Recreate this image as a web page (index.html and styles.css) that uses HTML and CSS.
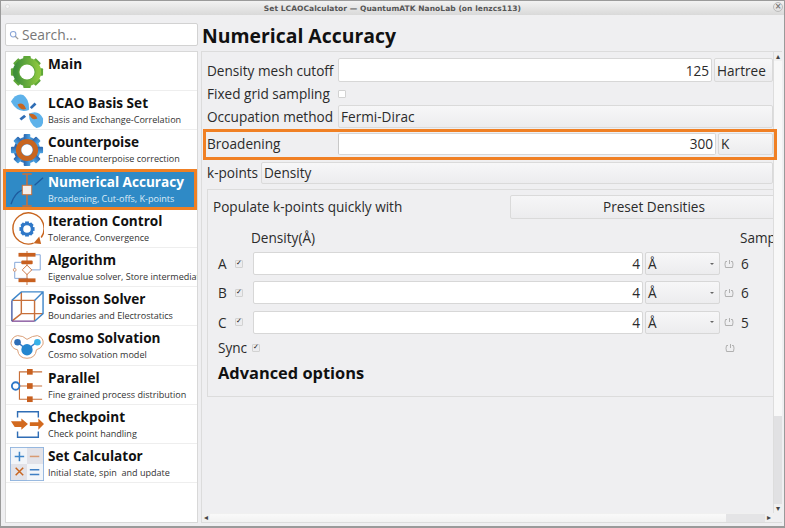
FILE: index.html
```html
<!DOCTYPE html>
<html lang="en">
<head>
<meta charset="utf-8">
<title>Set LCAOCalculator</title>
<link rel="stylesheet" href="styles.css">
</head>
<body>
<div class="window">
  <header class="titlebar">
    <span class="dot"></span>
    <span class="title">Set LCAOCalculator — QuantumATK NanoLab (on lenzcs113)</span>
    <span class="close">×</span>
  </header>
  <div class="main">
    <aside class="sidebar">
      <div class="search">
        <svg class="search-icon" viewBox="0 0 12 12"><circle cx="5" cy="5" r="3.3" fill="none" stroke="#8aa6d8" stroke-width="1.3"/><path d="M7.5 7.5L11 11" stroke="#9a9a9a" stroke-width="1.5"/></svg>
        <span>Search...</span>
      </div>
      <ul class="list">
        <li class="item">
          <svg class="icon" viewBox="0 0 36 36"><defs><linearGradient id="g1" x1="0" x2="1"><stop offset="0" stop-color="#3f8f3a"/><stop offset="1" stop-color="#8cc63f"/></linearGradient></defs><g fill="url(#g1)"><circle cx="18" cy="18" r="14"/></g><g fill="#5fa838"><rect x="14" y="1" width="8" height="34" rx="1"/><rect x="14" y="1" width="8" height="34" rx="1" transform="rotate(45 18 18)"/><rect x="14" y="1" width="8" height="34" rx="1" transform="rotate(90 18 18)"/><rect x="14" y="1" width="8" height="34" rx="1" transform="rotate(135 18 18)"/></g><circle cx="18" cy="18" r="12" fill="none" stroke="url(#g1)" stroke-width="6"/><circle cx="18" cy="18" r="8" fill="#fff"/></svg>
          <div class="text"><b>Main</b></div>
        </li>
        <li class="item">
          <svg class="icon" viewBox="0 0 36 36"><path d="M1 8Q6-1 14 1Q21 6 20 17Q8 21 1 8Z" fill="#5eb2ea"/><path d="M20 21Q30 16 35 26Q36 36 28 36Q20 32 20 21Z" fill="#5eb2ea"/><path d="M8 11Q14 8 17 16Q11 18 8 11Z" fill="#c8651f"/><path d="M20 21Q27 20 29 26Q23 29 20 21Z" fill="#c8651f"/><path d="M21 14L26 9L28 11L23 16Z" fill="#2f6db5"/><path d="M10 26L15 22L17 24L12 28Z" fill="#2f6db5"/></svg>
          <div class="text"><b>LCAO Basis Set</b><small>Basis and Exchange-Correlation</small></div>
        </li>
        <li class="item">
          <svg class="icon" viewBox="0 0 36 36"><defs><linearGradient id="g2" x1="0" x2="1"><stop offset="0" stop-color="#2b64ad"/><stop offset="1" stop-color="#4aa4e4"/></linearGradient></defs><g fill="url(#g2)"><circle cx="18" cy="18" r="14"/><rect x="14.5" y="1" width="7" height="34" rx="1"/><rect x="14.5" y="1" width="7" height="34" rx="1" transform="rotate(45 18 18)"/><rect x="14.5" y="1" width="7" height="34" rx="1" transform="rotate(90 18 18)"/><rect x="14.5" y="1" width="7" height="34" rx="1" transform="rotate(135 18 18)"/></g><circle cx="18" cy="18" r="9" fill="none" stroke="#c8651f" stroke-width="5.500"/><circle cx="18" cy="18" r="6" fill="#fff"/></svg>
          <div class="text"><b>Counterpoise</b><small>Enable counterpoise correction</small></div>
        </li>
        <li class="item selected">
          <svg class="icon" viewBox="0 0 36 36"><path d="M1 33Q5 21 13 18M26 13L35 5" fill="none" stroke="#1d5a9e" stroke-width="1.400"/><path d="M13 1H23M18 1V35M13 35H23" fill="none" stroke="#c8703a" stroke-width="1.600"/><rect x="13" y="13" width="10" height="10" fill="#f6efe9" stroke="#c8703a"/></svg>
          <div class="text"><b>Numerical Accuracy</b><small>Broadening, Cut-offs, K-points</small></div>
        </li>
        <li class="item">
          <svg class="icon" viewBox="0 0 36 36"><path d="M25 33A16.500 16.500 0 1 1 33 27" fill="none" stroke="#c8651f" stroke-width="1.500"/><path d="M25 33L33 34L31 26Z" fill="#c8651f"/><g fill="#2f78c8"><rect x="16" y="10" width="4" height="16"/><rect x="16" y="10" width="4" height="16" transform="rotate(45 18 18)"/><rect x="16" y="10" width="4" height="16" transform="rotate(90 18 18)"/><rect x="16" y="10" width="4" height="16" transform="rotate(135 18 18)"/></g><circle cx="18" cy="18" r="5.500" fill="#fff" stroke="#2f78c8" stroke-width="3"/></svg>
          <div class="text"><b>Iteration Control</b><small>Tolerance, Convergence</small></div>
        </li>
        <li class="item">
          <svg class="icon" viewBox="0 0 36 36"><path d="M19 4H32V20H19M19 12H5V29H19" fill="none" stroke="#7ea3d8"/><path d="M18 0V36" stroke="#c8703a"/><rect x="9" y="2" width="18" height="4" fill="#c8601f"/><rect x="12" y="10" width="12" height="4" rx="1" fill="#c8601f"/><path d="M18 15L23 20L18 25L13 20Z" fill="#fff" stroke="#c8703a"/><rect x="9" y="29" width="18" height="4" fill="#c8601f"/><circle cx="5" cy="20" r="1.500" fill="#fff" stroke="#c8703a" stroke-width=".7"/></svg>
          <div class="text"><b>Algorithm</b><small>Eigenvalue solver, Store intermediate results</small></div>
        </li>
        <li class="item">
          <svg class="icon" viewBox="0 0 36 36"><g fill="none" stroke-width="1.500"><path d="M12 2V25H35M12 25L2 33M2 11H26V33" stroke="#c8703a"/><path d="M2 33V11" stroke="#4a5fa8"/><path d="M2 33H26" stroke="#8a5aa0"/><path d="M2 11L12 2H35V25L26 33M26 11L35 2" stroke="#3f86c9"/></g></svg>
          <div class="text"><b>Poisson Solver</b><small>Boundaries and Electrostatics</small></div>
        </li>
        <li class="item">
          <svg class="icon" viewBox="0 0 36 36"><path d="M8 7Q14 7 18 11Q24 7 29 7Q36 9 35 16Q33 21 28 22Q27 31 18 31Q9 31 8 22Q2 21 1 15Q2 8 8 7Z" fill="#fff" stroke="#d89a72"/><path d="M8 14L18 22L28 14" stroke="#2f78c8" stroke-width="1.500" fill="none"/><circle cx="8" cy="14" r="3.500" fill="#2f6db5"/><circle cx="29" cy="14" r="3.500" fill="#38b2e8"/><circle cx="18" cy="22" r="6" fill="#2486cf"/></svg>
          <div class="text"><b>Cosmo Solvation</b><small>Cosmo solvation model</small></div>
        </li>
        <li class="item">
          <svg class="icon" viewBox="0 0 36 36"><path d="M7 18H34M10 18V3H34M10 18V32H34" fill="none" stroke="#c8703a" stroke-width="1.200"/><rect x="18" y="0" width="6" height="6" fill="#c8601f"/><rect x="18" y="15" width="6" height="6" fill="#c8601f"/><rect x="18" y="29" width="6" height="6" fill="#c8601f"/><circle cx="6" cy="18" r="4" fill="#fff" stroke="#2f78c8" stroke-width="2"/></svg>
          <div class="text"><b>Parallel</b><small>Fine grained process distribution</small></div>
        </li>
        <li class="item">
          <svg class="icon" viewBox="0 0 36 36"><path d="M8 10V4H30V10M8 25V31H30V25" fill="none" stroke="#2f6db5" stroke-width="1.500"/><path d="M1 14H12V11L19 17L12 23V20H5Z" fill="#d2691e"/><path d="M21 15H30V11L36 17L30 23V19H21Z" fill="#d2691e"/></svg>
          <div class="text"><b>Checkpoint</b><small>Check point handling</small></div>
        </li>
        <li class="item">
          <svg class="icon" viewBox="0 0 36 36"><rect x=".5" y=".5" width="35" height="35" fill="#e2e2e8" stroke="#8fb3de"/><rect x="1" y="1" width="17" height="17" fill="#f2f5f9"/><rect x="18" y="18" width="17" height="17" fill="#f2f5f9"/><path d="M10 5V15M5 10H15" stroke="#3f86c9" stroke-width="1.600"/><path d="M21 10H31" stroke="#d89a72" stroke-width="1.600"/><path d="M6 22L14 30M14 22L6 30" stroke="#c8651f" stroke-width="1.600"/><path d="M21 24H31M21 29H31" stroke="#3f7fc4" stroke-width="1.600"/></svg>
          <div class="text"><b>Set Calculator</b><small>Initial state, spin  and update</small></div>
        </li>
      </ul>
      <div class="item-focus"></div>
    </aside>
    <section class="pane">
      <h1>Numerical Accuracy</h1>
      <div class="scrollarea">
        <div class="viewport">
          <div class="content">
            <div class="row">
              <label class="lbl-wide">Density mesh cutoff</label>
              <div class="input">125</div>
              <div class="unit hartree">Hartree</div>
            </div>
            <div class="row row-check">
              <label class="lbl-wide">Fixed grid sampling</label>
              <span class="check"></span>
            </div>
            <div class="row row-occ">
              <label class="lbl-wide">Occupation method</label>
              <div class="select">Fermi-Dirac</div>
            </div>
            <div class="row row-broad">
              <label class="lbl-wide">Broadening</label>
              <div class="input">300</div>
              <div class="unit kelvin">K</div>
            </div>
            <div class="row row-k">
              <label class="lbl-k">k-points</label>
              <div class="select">Density</div>
            </div>
            <div class="group">
              <div class="populate">
                <span>Populate k-points quickly with</span>
                <div class="button">Preset Densities</div>
              </div>
              <div class="heads"><span class="head-density">Density(Å)</span><span class="head-samp">Sampling</span></div>
              <div class="krow"><span class="axis">A</span><span class="check on"></span><div class="input">4</div><div class="combo">Å<i></i></div><svg class="link" viewBox="0 0 10 8"><path d="M3 1.500H1.500Q.5 4 1.500 7.500H8.500Q9.500 4 8.500 1.500H7M5.500 0V4" fill="none" stroke="#b0b0b0"/></svg><span class="sval">6</span></div>
              <div class="krow"><span class="axis">B</span><span class="check on"></span><div class="input">4</div><div class="combo">Å<i></i></div><svg class="link" viewBox="0 0 10 8"><path d="M3 1.500H1.500Q.5 4 1.500 7.500H8.500Q9.500 4 8.500 1.500H7M5.500 0V4" fill="none" stroke="#b0b0b0"/></svg><span class="sval">6</span></div>
              <div class="krow"><span class="axis">C</span><span class="check on"></span><div class="input">4</div><div class="combo">Å<i></i></div><svg class="link" viewBox="0 0 10 8"><path d="M3 1.500H1.500Q.5 4 1.500 7.500H8.500Q9.500 4 8.500 1.500H7M5.500 0V4" fill="none" stroke="#b0b0b0"/></svg><span class="sval">5</span></div>
              <div class="syncrow"><span class="sync">Sync</span><span class="check on"></span><svg class="link sync-link" viewBox="0 0 10 8"><path d="M3 1.500H1.500Q.5 4 1.500 7.500H8.500Q9.500 4 8.500 1.500H7M5.500 0V4" fill="none" stroke="#b0b0b0"/></svg></div>
              <h2>Advanced options</h2>
            </div>
          </div>
        </div>
        <div class="vbar"><span class="arrow">▴</span><div class="vthumb"></div><div class="vtrack"></div><span class="arrow">▾</span></div>
        <div class="hbar"><span class="arrow">◂</span><div class="hthumb"></div><div class="htrack"></div><span class="arrow">▸</span></div>
        <div class="corner"></div>
      </div>
      <div class="broad-focus"></div>
    </section>
  </div>
</div>
</body>
</html>
```
FILE: styles.css
```css
* { box-sizing: border-box; }
html, body { margin: 0; height: 100%; }
body { font-family: "Open Sans", "Noto Sans", sans-serif; color: #2b2b2b; background: #efeff1; overflow: hidden; }
.window { width: 785px; height: 528px; display: flex; flex-direction: column; background: #efeff1; border: 1px solid #9a9a9a; border-width: 1px 1px 2px 1px; }
.titlebar { height: 14px; flex: none; display: flex; align-items: center; justify-content: center; position: relative; background: linear-gradient(#f2f2f2, #d9d9d9); }
.title { font: bold 7.500px "DejaVu Sans", sans-serif; color: #555; letter-spacing: .06px; }
.dot { position: absolute; left: 4px; top: 3px; width: 5px; height: 5px; border-radius: 50%; background: #f4f4f4; border: 1px solid #ddd; }
.close { position: absolute; right: 1px; top: 1px; width: 10px; height: 10px; border-radius: 50%; border: 1px solid #bbb; font: bold 8px/8px "DejaVu Sans", sans-serif; text-align: center; color: #777; }
.main { flex: 1; display: flex; min-height: 0; padding-left: 4px; }

.sidebar { width: 193px; flex: none; display: flex; flex-direction: column; padding-top: 8px; padding-bottom: 3px; position: relative; }
.search { height: 23px; flex: none; background: #fff; border: 1px solid #d2d2d2; border-radius: 2px; display: flex; align-items: center; gap: 3px; padding-left: 3px; font-size: 13.800px; color: #777; margin-bottom: 5px; }
.search-icon { width: 10px; height: 10px; }
.list { flex: 1; list-style: none; margin: 0; padding: 0; background: #fff; border: 1px solid #d8d8d8; overflow: hidden; }
.item { height: 39.200px; display: flex; gap: 4px; border-bottom: 1px solid #eeeeee; padding: 3px 0 0 4px; white-space: nowrap; overflow: hidden; }
.icon { width: 34px; height: 34px; flex: none; }
.text { display: flex; flex-direction: column; color: #222; min-width: 0; }
.text b { font-size: 13.600px; line-height: 18px; color: #111; }
.text small { font-size: 9.050px; line-height: 14px; margin-top: 1px; color: #333; white-space: pre; }
.selected { background: #2f8ac6; }
.selected b { color: #fff; }
.selected small { color: #dcebf6; }
.item-focus { position: absolute; left: -2px; top: 154px; width: 194px; height: 41px; border: 3px solid #f08024; pointer-events: none; }

.pane { flex: 1; min-width: 0; display: flex; flex-direction: column; position: relative; padding-left: 3px; }
h1 { margin: 0; height: 36px; font-size: 19.400px; line-height: 42px; font-weight: 700; color: #111; flex: none; padding-left: 1px; }
.scrollarea { height: 472px; flex: none; display: grid; grid-template-columns: 1fr 9px; grid-template-rows: 1fr 9px; border: 1px solid #dcdcdc; border-right: 0; margin-right: 2px; }
.viewport { overflow: hidden; min-width: 0; min-height: 0; }
.content { padding: 6px 0 0 5px; font-size: 13.600px; width: 571px; }
.row { height: 24px; display: flex; align-items: stretch; }
.row-check { align-items: center; height: 23px; }
.row-occ { height: 23px; }
.row-broad { margin-top: 2px; padding: 3px 0; height: 28px; }
.row-broad > *, .row-k > * { padding-bottom: 2px; }
.row-k { margin-top: 4px; height: 22px; }
label { display: flex; align-items: center; white-space: nowrap; }
.lbl-wide { width: 131px; flex: none; }
.lbl-k { width: 54px; flex: none; }
.input { flex: 1; background: #fff; border: 1px solid #d7d7d7; border-radius: 2px; padding-right: 2px; display: flex; align-items: center; justify-content: flex-end; min-width: 0; }
.unit, .select { background: linear-gradient(#f7f7f8, #ececee); border: 1px solid #dadada; border-radius: 2px; display: flex; align-items: center; padding-left: 2px; }
.select { flex: 1; }
.hartree { width: 59px; margin-left: 2px; flex: none; }
.kelvin { width: 55px; margin-left: 2px; flex: none; }
.row-broad .input { border-left-color: #c8c8c8; }
.check { width: 8px; height: 8px; border: 1px solid #d2d2d2; background: #fff; border-radius: 1px; display: inline-block; position: relative; flex: none; }
.check.on { background: #ececee; }
.check.on::after { content: "✓"; position: absolute; left: 0; top: -2px; font: bold 7px/9px "DejaVu Sans", sans-serif; color: #111; }

.group { margin-top: 5px; height: 208px; border: 1px solid #dcdcdc; border-right: 0; padding: 5px 0 0 5px; display: flex; flex-direction: column; }
.populate { display: flex; align-items: center; height: 24px; justify-content: space-between; width: 585px; padding-bottom: 1px; }
.button { width: 288px; height: 24px; flex: none; background: linear-gradient(#f6f6f7, #ececee); border: 1px solid #dadada; border-radius: 2px; display: flex; align-items: center; justify-content: center; padding-bottom: 1px; }
.heads { height: 24px; margin-top: 6px; margin-bottom: 3px; display: flex; align-items: center; padding-left: 38px; white-space: nowrap; overflow: hidden; }
.head-density { width: 489px; flex: none; }
.krow { height: 23px; margin-bottom: 6.300px; display: flex; align-items: center; padding-left: 5px; }
.axis { width: 17px; flex: none; }
.krow .check { margin-right: 10px; }
.krow .input { width: 390px; flex: none; height: 23px; }
.combo { width: 75px; height: 23px; flex: none; margin-left: 2px; background: linear-gradient(#f7f7f8, #ececee); border: 1px solid #d7d7d7; border-radius: 2px; display: flex; align-items: center; justify-content: space-between; padding: 0 5px 0 2px; }
.combo i { border: 2px solid transparent; border-top: 2px solid #666; margin-top: 2px; }
.link { width: 10px; height: 8px; margin-left: 4px; flex: none; }
.sval { margin-left: 7px; }
.syncrow { display: flex; align-items: center; height: 18px; padding-left: 5px; margin-top: -1px; }
.sync { width: 34px; }
.sync-link { margin-left: 465px; }
h2 { margin: 5px 0 0 5px; font-size: 16.400px; line-height: 22px; font-weight: 700; color: #111; }

.vbar { display: flex; flex-direction: column; background: #f0f0f0; border-left: 1px solid #ddd; }
.hbar { grid-column: 1; display: flex; align-items: center; background: #f0f0f0; }
.arrow { font: 8px/9px "DejaVu Sans", sans-serif; color: #444; width: 8px; height: 9px; text-align: center; flex: none; }
.vthumb { height: 355px; background: #f8f8f8; }
.vtrack { flex: 1; background: #e1e1e3; }
.hthumb { width: 516px; height: 8px; background: linear-gradient(#f9f9f9, #f2f2f2); }
.htrack { flex: 1; height: 8px; background: #e4e4e6; }
.corner { background: #efeff1; }
.broad-focus { position: absolute; left: 5px; top: 114px; width: 574px; height: 31px; border: 3px solid #f08024; pointer-events: none; }
```
